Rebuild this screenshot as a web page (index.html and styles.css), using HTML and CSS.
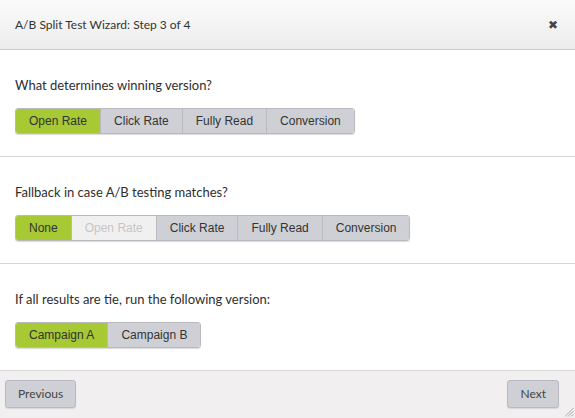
FILE: index.html
```html
<!DOCTYPE html>
<html>
<head>
<meta charset="utf-8">
<link rel="stylesheet" href="styles.css">
</head>
<body>
<div class="dialog">
  <div class="header">
    <span class="title">A/B Split Test Wizard: Step 3 of 4</span>
    <span class="close">✖</span>
  </div>
  <div class="section">
    <div class="label">What determines winning version?</div>
    <div class="group">
      <span class="btn active">Open Rate</span>
      <span class="btn">Click Rate</span>
      <span class="btn">Fully Read</span>
      <span class="btn">Conversion</span>
    </div>
  </div>
  <div class="section">
    <div class="label">Fallback in case A/B testing matches?</div>
    <div class="group">
      <span class="btn active">None</span>
      <span class="btn disabled">Open Rate</span>
      <span class="btn">Click Rate</span>
      <span class="btn">Fully Read</span>
      <span class="btn">Conversion</span>
    </div>
  </div>
  <div class="section">
    <div class="label">If all results are tie, run the following version:</div>
    <div class="group">
      <span class="btn active">Campaign A</span>
      <span class="btn">Campaign B</span>
    </div>
  </div>
  <div class="footer">
    <span class="fbtn prev">Previous</span>
    <span class="fbtn next">Next</span>
    <svg class="grip" width="10" height="10" viewBox="0 0 10 10">
      <line x1="9.5" y1="1" x2="1" y2="9.5" stroke="#aaa" stroke-width="1"/>
      <line x1="9.5" y1="4" x2="4" y2="9.5" stroke="#aaa" stroke-width="1"/>
      <line x1="9.5" y1="7" x2="7" y2="9.5" stroke="#aaa" stroke-width="1"/>
    </svg>
  </div>
</div>
</body>
</html>
```
FILE: styles.css
```css
html, body {
  margin: 0;
  padding: 0;
  background: #fff;
}
.dialog {
  position: relative;
  width: 575px;
  height: 418px;
  display: flex;
  flex-direction: column;
  font-family: Lato, "Open Sans", sans-serif;
  color: #333;
  overflow: hidden;
}
.header {
  height: 49px;
  border-bottom: 1px solid #c9c9c9;
  background: linear-gradient(#fbfbfb, #ececec);
  display: flex;
  align-items: center;
  justify-content: space-between;
  padding: 0 17px 0 15px;
  box-sizing: content-box;
}
.title {
  font-size: 12px;
  color: #333;
}
.close {
  font-size: 12px;
  color: #444;
}
.section {
  padding: 27px 15px 22px;
  border-bottom: 1px solid #d8d8d8;
}
.label {
  font-size: 13px;
  line-height: 16px;
  height: 16px;
  margin-bottom: 15px;
  color: #2e2e2e;
}
.group {
  display: inline-flex;
  border: 1px solid #b9b9bf;
  border-radius: 3px;
  box-shadow: 0 1px 1px rgba(0,0,0,0.15);
  overflow: hidden;
}
.btn {
  font-family: "Liberation Sans", Arial, sans-serif;
  font-size: 12px;
  line-height: 24px;
  height: 24px;
  padding: 0 13px;
  background: #cfd0d5;
  color: #333;
  border-left: 1px solid #b9b9bf;
}
.btn:first-child {
  border-left: none;
}
.btn.active {
  background: #a6c934;
  color: #333;
}
.btn.disabled {
  background: #f0f0f0;
  color: #c6c6c6;
}
.footer {
  flex: 1;
  background: #f1eff0;
  display: flex;
  justify-content: space-between;
  align-items: flex-start;
  padding: 9px 16px 0 5px;
}
.fbtn {
  font-size: 12px;
  line-height: 26px;
  height: 26px;
  padding: 0 12px;
  background: #cfd0d5;
  border: 1px solid #b9b9bf;
  border-radius: 3px;
  color: #444;
  box-shadow: 0 1px 1px rgba(0,0,0,0.1);
}
.grip {
  position: absolute;
  right: 1px;
  bottom: 1px;
}
```
